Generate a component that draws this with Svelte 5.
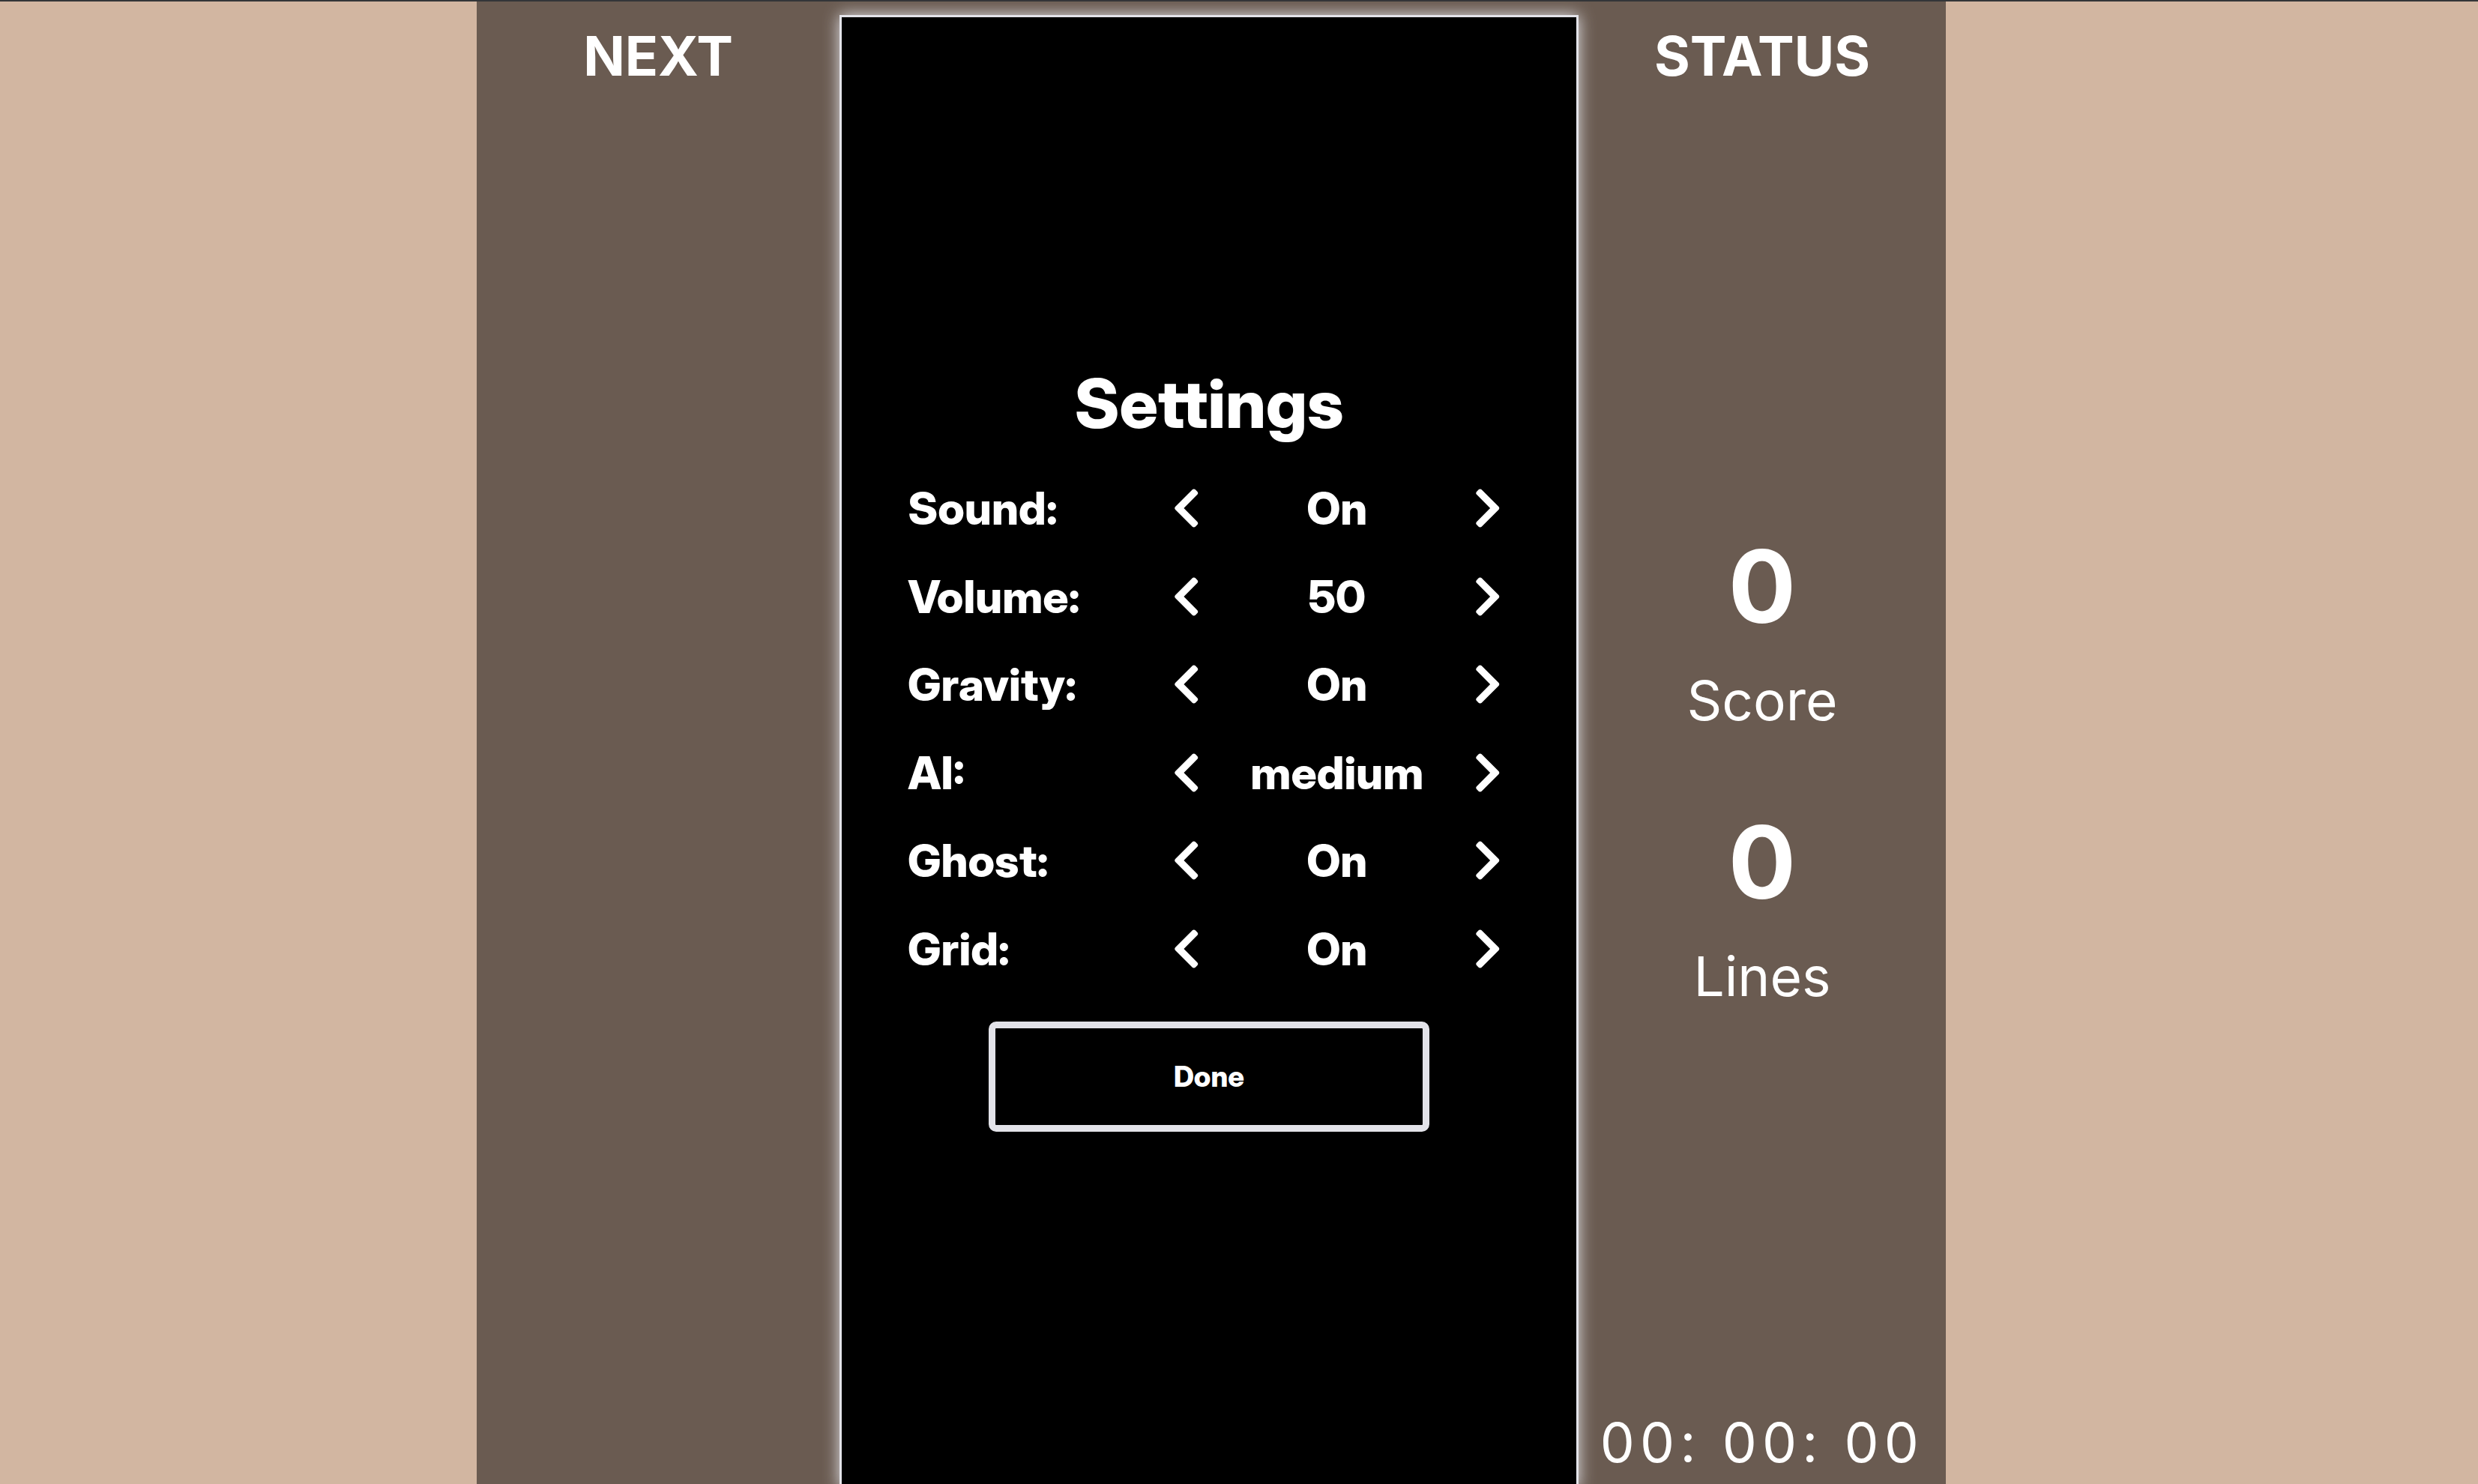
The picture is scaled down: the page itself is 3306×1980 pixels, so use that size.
<script>
  let settings = $state([
    { name: 'Sound', options: ['On', 'Off'], index: 0 },
    { name: 'Volume', options: ['0', '25', '50', '75', '100'], index: 2 },
    { name: 'Gravity', options: ['On', 'Off'], index: 0 },
    { name: 'AI', options: ['easy', 'medium', 'hard'], index: 1 },
    { name: 'Ghost', options: ['On', 'Off'], index: 0 },
    { name: 'Grid', options: ['On', 'Off'], index: 0 }
  ]);

  const stats = [
    { label: 'Score', value: 0 },
    { label: 'Lines', value: 0 }
  ];

  function step(setting, by) {
    const count = setting.options.length;
    setting.index = (setting.index + by + count) % count;
  }
</script>

<div class="page">
  <div class="game">
    <aside class="side">
      <h3>NEXT</h3>
    </aside>

    <main class="board">
      <section class="settings">
        <h2>Settings</h2>
        <div class="rows">
          {#each settings as setting}
            <div class="row">
              <span class="name">{setting.name}:</span>
              <button class="arrow" aria-label="Previous {setting.name}" onclick={() => step(setting, -1)}>
                <svg viewBox="0 0 320 512" aria-hidden="true">
                  <path d="M34.52 239.03L228.87 44.69c9.37-9.37 24.57-9.37 33.94 0l22.67 22.67c9.36 9.36 9.37 24.52.04 33.9L131.49 256l154.02 154.75c9.34 9.38 9.32 24.54-.04 33.9l-22.67 22.67c-9.37 9.37-24.57 9.37-33.94 0L34.52 272.97c-9.37-9.37-9.37-24.57 0-33.94z" />
                </svg>
              </button>
              <output class="value">{setting.options[setting.index]}</output>
              <button class="arrow" aria-label="Next {setting.name}" onclick={() => step(setting, 1)}>
                <svg viewBox="0 0 320 512" aria-hidden="true">
                  <path d="M285.476 272.971L91.132 467.314c-9.373 9.373-24.569 9.373-33.941 0l-22.667-22.667c-9.357-9.357-9.375-24.522-.04-33.901L188.505 256 34.484 101.255c-9.335-9.379-9.317-24.544.04-33.901l22.667-22.667c9.373-9.373 24.569-9.373 33.941 0L285.475 239.03c9.373 9.372 9.373 24.568.001 33.941z" />
                </svg>
              </button>
            </div>
          {/each}
        </div>
        <button class="done">Done</button>
      </section>
    </main>

    <aside class="side">
      <h3>STATUS</h3>
      <div class="stats">
        {#each stats as stat}
          <div class="stat">
            <strong>{stat.value}</strong>
            <span>{stat.label}</span>
          </div>
        {/each}
      </div>
      <time>00: 00: 00</time>
    </aside>
  </div>
</div>

<style>
  :global(body) {
    margin: 0;
    background: #d2b6a1;
  }

  .page {
    box-sizing: border-box;
    height: 100vh;
    overflow: hidden;
    border-top: 2px solid #333538;
    display: grid;
    grid-template-columns: 636fr 1960fr 710fr;
    background: #d2b6a1;
    color: #fff;
    font-family: Inter, "Liberation Sans", sans-serif;
    font-size: 73px;
    line-height: 90px;
  }

  .game {
    grid-column: 2;
    display: grid;
    grid-template-columns: 484fr 986fr 490fr;
    min-height: 0;
    background: #6a5b51;
  }

  .side {
    box-sizing: border-box;
    display: flex;
    flex-direction: column;
    align-items: center;
    min-height: 0;
    padding: 28px 0 16px;
  }

  h2,
  h3 {
    margin: 0;
  }

  h3 {
    font-size: 73px;
    font-weight: 700;
  }

  .stats {
    flex: 1;
    display: flex;
    flex-direction: column;
    justify-content: center;
    gap: 71px;
    padding-top: 30px;
  }

  .stat {
    display: flex;
    flex-direction: column;
    align-items: center;
    gap: 9px;
  }

  .stat strong {
    font-size: 134px;
    line-height: 198px;
  }

  time {
    letter-spacing: 0.1em;
    white-space: nowrap;
  }

  .board {
    box-sizing: content-box;
    aspect-ratio: 1 / 2;
    align-self: start;
    margin-top: 18px;
    border: 3px solid #e3e3e9;
    box-shadow: 0 0 20px #e3e3e9;
    background: #000;
    display: flex;
    flex-direction: column;
    align-items: center;
    justify-content: center;
  }

  .settings {
    box-sizing: border-box;
    width: 100%;
    padding: 0 9% 13px;
    display: flex;
    flex-direction: column;
    align-items: center;
    font-family: "Inter Display", Inter, "Liberation Sans", sans-serif;
    font-weight: 800;
    font-variant-ligatures: no-common-ligatures;
  }

  h2 {
    font-size: 90px;
    line-height: 110px;
    font-weight: 800;
    margin-bottom: 26px;
  }

  .rows {
    width: 100%;
    height: 705px;
    display: grid;
    grid-template-rows: repeat(6, 1fr);
    font-size: 60px;
  }

  .row {
    display: grid;
    grid-template-columns: 1fr 60px 342px 60px;
    align-items: center;
  }

  .value {
    text-align: center;
  }

  button {
    border: 0;
    background: none;
    color: inherit;
    font: inherit;
    padding: 0;
    cursor: pointer;
  }

  .arrow {
    display: flex;
    justify-content: center;
  }

  .arrow svg {
    height: 60px;
    fill: currentColor;
  }

  .done {
    box-sizing: border-box;
    width: 588px;
    max-width: 100%;
    height: 147px;
    margin-top: 38px;
    border: 9px solid #e3e3e9;
    border-radius: 10px;
    font-size: 38px;
  }
</style>
